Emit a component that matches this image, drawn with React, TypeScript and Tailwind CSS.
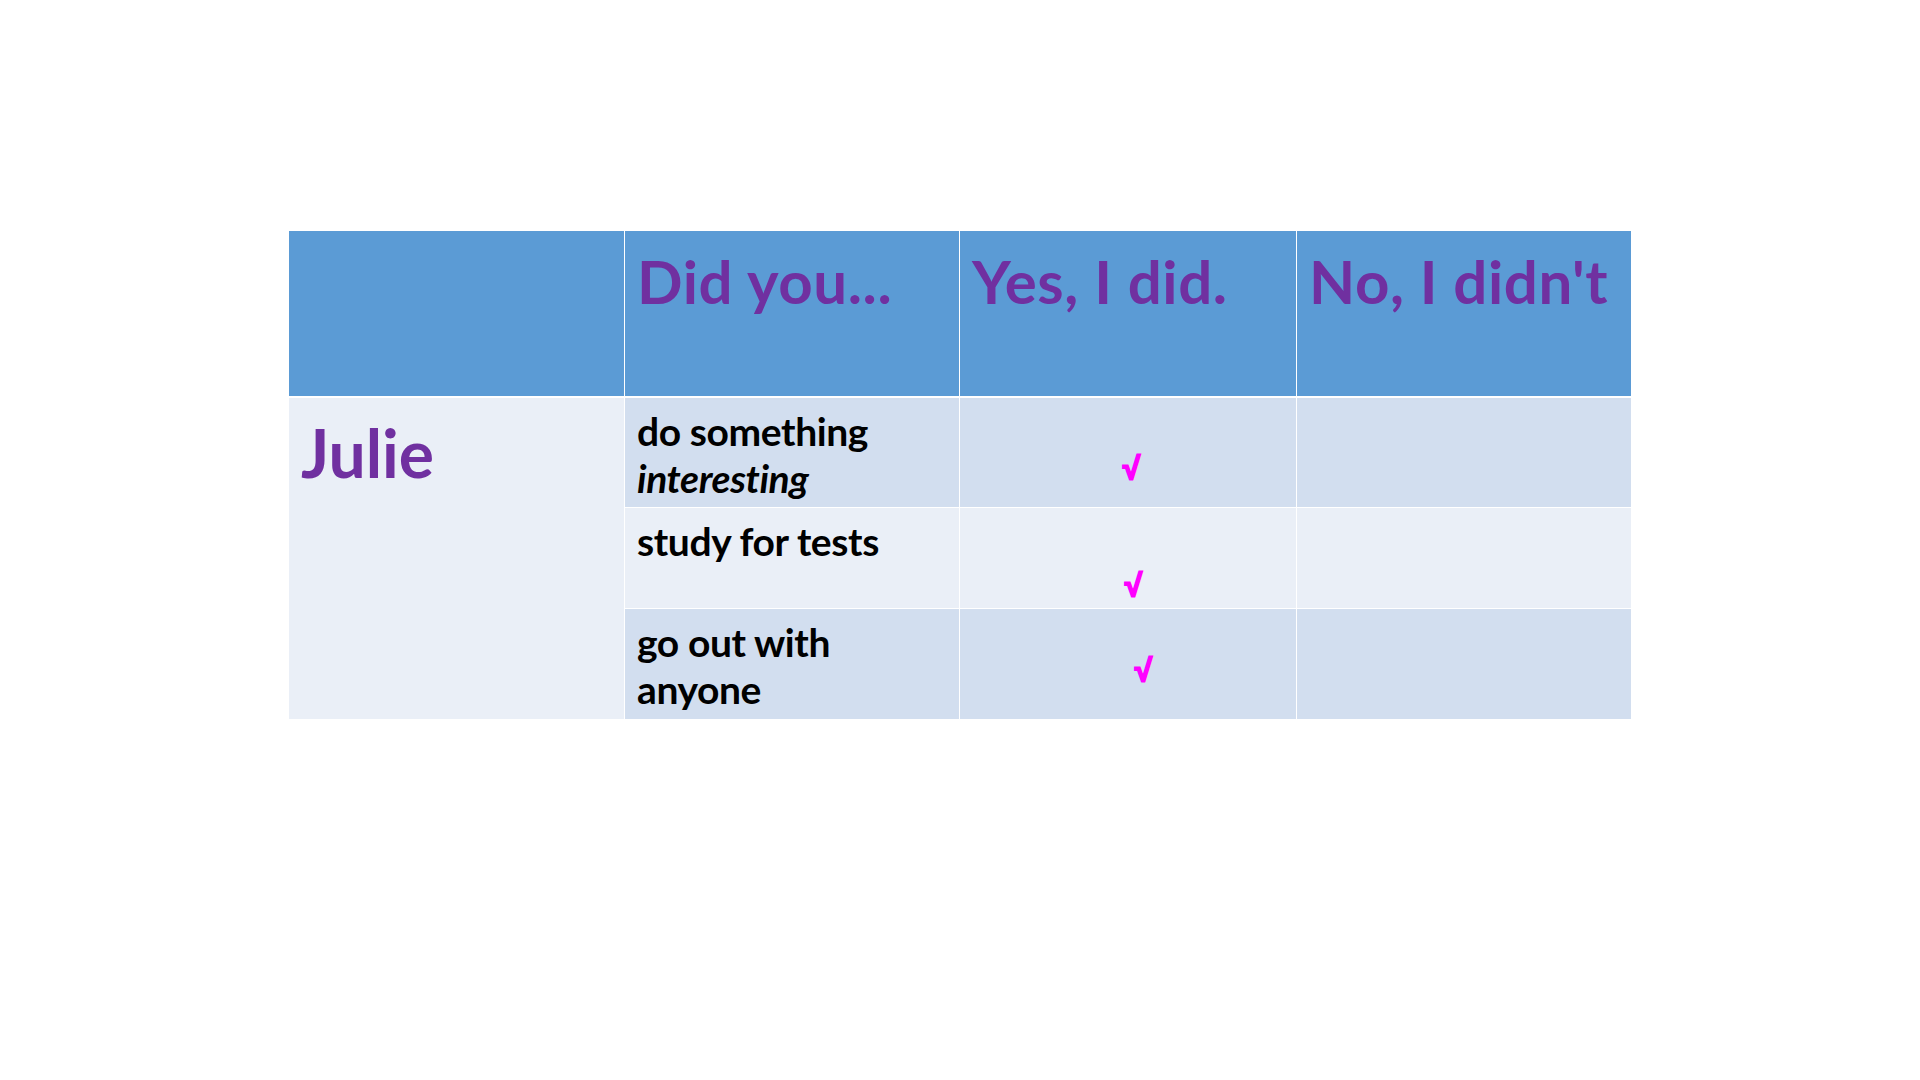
const head = "h-[165px] bg-[#5B9BD5] px-3 pt-[14px] text-[60px] leading-[1.2] tracking-[0.6px] font-bold text-[#7030A0]";
const dark = "bg-[#D2DEEF]";
const light = "bg-[#EAEFF7]";
const body = "px-3 text-[39px] leading-[47px] tracking-[-0.4px] font-bold text-black";
const check = "block text-[31px] leading-none font-bold text-[#FF00FF] [-webkit-text-stroke:2px_#FF00FF] [font-family:'Liberation_Sans',sans-serif]";

export default function App() {
  return (
    <div className="min-h-screen bg-white pt-[231px] pl-[289px] [font-family:Lato,'Open_Sans',sans-serif]">
      <div className="grid w-[1342px] grid-cols-[335px_334px_336px_334px] grid-rows-[166px_109px_100px_110px] gap-px bg-white">
        <div className={head}></div>
        <div className={head}>Did you...</div>
        <div className={head}>Yes, I did.</div>
        <div className={head}>No, I didn't</div>

        <div className={`${light} row-span-3 px-3 pt-[15px] text-[66px] leading-[1.2] font-bold text-[#7030A0]`}>
          Julie
        </div>
        <div className={`${dark} ${body} pt-[10px]`}>
          do something <i>interesting</i>
        </div>
        <div className={dark}>
          <span className={`${check} pl-[163px] pt-[55px]`}>√</span>
        </div>
        <div className={dark}></div>

        <div className={`${light} ${body} pt-[10px]`}>study for tests</div>
        <div className={light}>
          <span className={`${check} pl-[165px] pt-[62px]`}>√</span>
        </div>
        <div className={light}></div>

        <div className={`${dark} ${body} pt-[10px]`}>go out with anyone</div>
        <div className={dark}>
          <span className={`${check} pl-[175px] pt-[46px]`}>√</span>
        </div>
        <div className={dark}></div>
      </div>
    </div>
  );
}
